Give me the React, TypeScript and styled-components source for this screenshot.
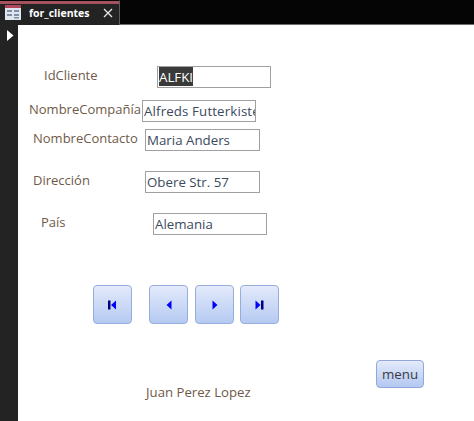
import React from "react";
import styled, { createGlobalStyle } from "styled-components";

const Global = createGlobalStyle`
  html, body { margin: 0; padding: 0; background: #fff; overflow: hidden; }
  #root { width: 474px; height: 421px; }
`;

const Shell = styled.div`
  width: 474px;
  height: 421px;
  display: flex;
  flex-direction: column;
  font-family: "Open Sans", "Noto Sans", sans-serif;
  font-size: 13px;
  background: #fff;
`;

const TabBar = styled.div`
  height: 24px;
  flex: none;
  display: flex;
  background: #050505;
  border-bottom: 1px solid #6d6d6d;
  box-sizing: content-box;
`;

const Tab = styled.div`
  width: 120px;
  height: 25px;
  box-sizing: border-box;
  display: flex;
  align-items: center;
  background: #232323;
  border-top: 1px solid #050505;
  border-right: 1px solid #5c5c5c;
  color: #fff;
  font-weight: 700;
  font-size: 10.5px;
  padding: 0 0 1px 5px;
  position: relative;
`;

const TabStripe = styled.span`
  position: absolute;
  top: 0;
  left: 0;
  right: 0;
  height: 3px;
  background: #a5515f;
`;

const TabTitle = styled.span`
  margin-left: 8px;
  width: 74px;
`;

const Body = styled.div`
  flex: 1;
  display: flex;
  min-height: 0;
`;

const Selector = styled.div`
  width: 18px;
  flex: none;
  background: #232323;
  padding: 2px 0 0 7px;
  box-sizing: border-box;
`;

const Form = styled.div`
  flex: 1;
  display: flex;
  flex-direction: column;
  padding-top: 41px;
  background: #fff;
`;

const Row = styled.div<{ $left: number; $top: number }>`
  display: flex;
  align-items: flex-start;
  margin-left: ${(p) => p.$left}px;
  margin-top: ${(p) => p.$top}px;
  height: 22px;
`;

const Label = styled.span<{ $width: number }>`
  width: ${(p) => p.$width}px;
  flex: none;
  color: #6f5a49;
  line-height: 18px;
  white-space: nowrap;
`;

const Field = styled.div<{ $width: number; $spacing?: number }>`
  width: ${(p) => p.$width}px;
  height: 22px;
  box-sizing: border-box;
  border: 1px solid #a0a0a0;
  padding-left: 1px;
  color: #3b4a5e;
  font-size: 13.3px;
  letter-spacing: ${(p) => p.$spacing ?? 0}px;
  line-height: 20px;
  white-space: nowrap;
  overflow: hidden;
  background: #fff;
`;

const Selected = styled.span`
  background: #3a3a3a;
  color: #fff;
  display: inline-block;
  height: 19px;
`;

const NavRow = styled.div`
  display: flex;
  margin: 50px 0 0 75px;
`;

const NavButton = styled.button<{ $after?: number }>`
  width: 39px;
  height: 39px;
  margin-right: ${(p) => p.$after ?? 7}px;
  padding: 0;
  display: flex;
  align-items: center;
  justify-content: center;
  border: 1px solid #97aedc;
  border-radius: 4px;
  background: linear-gradient(#e3eafa, #b5caf2);
`;

const MenuLine = styled.div`
  display: flex;
  justify-content: flex-end;
  margin: 36px 50px 0 0;
`;

const MenuButton = styled.button`
  width: 48px;
  height: 28px;
  padding: 0;
  border: 1px solid #8fa9dc;
  border-radius: 4px;
  background: linear-gradient(#e3eafa, #b3c9f1);
  color: #3b3b45;
  font-family: inherit;
  font-size: 13.3px;
`;

const Author = styled.div`
  margin: -5px 0 0 128px;
  color: #6f5a49;
  font-size: 13.2px;
  line-height: 18px;
`;

const Glyph = ({ bar, dir }: { bar?: "l" | "r"; dir: "l" | "r" }) => (
  <svg width={bar ? 9 : 6} height="10" viewBox={bar ? "0 0 9 10" : "0 0 6 10"} aria-hidden="true">
    {bar === "l" && <rect x="0" y="0.5" width="2.5" height="9" fill="#000080" />}
    {bar === "r" && <rect x="6" y="0.5" width="2.5" height="9" fill="#000080" />}
    {dir === "l" ? (
      <polygon points={bar ? "3,5 8,0.5 8,9.5" : "0.5,5 5.5,0.5 5.5,9.5"} fill="#0000ff" />
    ) : (
      <polygon points="0.5,0.5 5.5,5 0.5,9.5" fill="#0000ff" />
    )}
  </svg>
);

const FormIcon = () => (
  <svg width="16" height="16" viewBox="0 0 16 16" aria-hidden="true">
    <rect x="0" y="0" width="16" height="15" fill="#dfe6f0" />
    <rect x="0" y="0" width="16" height="3" fill="#b2475c" />
    <rect x="2" y="5" width="5" height="2" fill="#7f8ea3" />
    <rect x="9" y="5" width="5" height="2" fill="#7f8ea3" />
    <rect x="2" y="9" width="5" height="2" fill="#7f8ea3" />
    <rect x="9" y="9" width="5" height="2" fill="#7f8ea3" />
    <rect x="9" y="12" width="5" height="1.5" fill="#7f8ea3" />
  </svg>
);

const Close = () => (
  <svg width="10" height="10" viewBox="0 0 10 10" aria-hidden="true">
    <path d="M1 1 L9 9 M9 1 L1 9" stroke="#e6e6e6" strokeWidth="1.3" fill="none" />
  </svg>
);

export default function App() {
  return (
    <Shell>
      <Global />
      <TabBar>
        <Tab>
          <TabStripe />
          <FormIcon />
          <TabTitle>for_clientes</TabTitle>
          <Close />
        </Tab>
      </TabBar>
      <Body>
        <Selector>
          <svg width="7" height="11" viewBox="0 0 7 11" aria-hidden="true">
            <polygon points="0,0 6.5,5.5 0,11" fill="#fff" />
          </svg>
        </Selector>
        <Form>
          <Row $left={26} $top={0}>
            <Label $width={113}>IdCliente</Label>
            <Field $width={114}><Selected>ALFKI</Selected></Field>
          </Row>
          <Row $left={11} $top={12}>
            <Label $width={113}>NombreCompañía</Label>
            <Field $width={114} $spacing={0.13}>Alfreds Futterkiste</Field>
          </Row>
          <Row $left={15} $top={7}>
            <Label $width={112}>NombreContacto</Label>
            <Field $width={115}>Maria Anders</Field>
          </Row>
          <Row $left={15} $top={20}>
            <Label $width={112}>Dirección</Label>
            <Field $width={115}>Obere Str. 57</Field>
          </Row>
          <Row $left={23} $top={20}>
            <Label $width={112}>País</Label>
            <Field $width={114}>Alemania</Field>
          </Row>
          <NavRow>
            <NavButton $after={17}><Glyph bar="l" dir="l" /></NavButton>
            <NavButton><Glyph dir="l" /></NavButton>
            <NavButton $after={6}><Glyph dir="r" /></NavButton>
            <NavButton><Glyph bar="r" dir="r" /></NavButton>
          </NavRow>
          <MenuLine><MenuButton>menu</MenuButton></MenuLine>
          <Author>Juan Perez Lopez</Author>
        </Form>
      </Body>
    </Shell>
  );
}
